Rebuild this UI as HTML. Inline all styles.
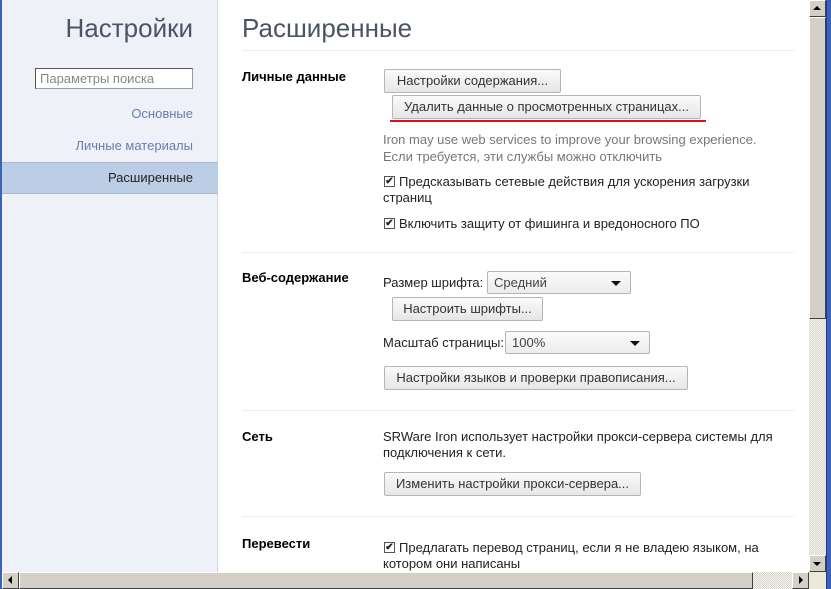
<!DOCTYPE html><html><head><meta charset="utf-8"><style>
*{margin:0;padding:0;box-sizing:border-box}
body{width:831px;height:589px;overflow:hidden;background:#fff;font-family:"Liberation Sans",sans-serif;font-size:13px;color:#222;position:relative}
.a{position:absolute;white-space:nowrap}
.btn{position:absolute;height:24px;border:1px solid #b5b5b5;border-radius:2px;background:linear-gradient(#fafafa,#e6e6e6);font-size:13px;color:#333;line-height:22px;text-align:center}
.sel{position:absolute;height:23px;border:1px solid #b5b5b5;border-radius:2px;background:linear-gradient(#fafafa,#ececec);line-height:21px;padding-left:6px;color:#444}
.sel:after{content:"";position:absolute;right:9px;top:9px;border-left:5px solid transparent;border-right:5px solid transparent;border-top:5px solid #111}
.cb{position:absolute;width:11px;height:11px;border:1px solid #555;background:#fff;font-size:10px;line-height:9px;text-align:center;font-weight:bold}
.sep{position:absolute;left:242px;width:553px;height:1px;background:#eee}
h4{position:absolute;left:242px;font-size:13px;font-weight:bold;color:#000}
</style></head><body>
<div class="a" style="left:0;top:0;width:2px;height:589px;background:#3a62b5"></div>
<div class="a" style="left:2px;top:0;width:216px;height:572px;background:#eef1f7;border-right:1px solid #d4d8e0"></div>
<div class="a" style="right:638px;top:13px;font-size:26px;color:#4b5467">Настройки</div>
<div class="a" style="left:35px;top:68px;width:158px;height:21px;border:1px solid #999;border-top-color:#555;border-left-color:#555;background:#fff;color:#888;padding-left:4px;line-height:19px">Параметры поиска</div>
<div class="a" style="right:638px;top:106px;color:#6a7cab">Основные</div>
<div class="a" style="right:638px;top:138px;color:#6a7cab">Личные материалы</div>
<div class="a" style="left:2px;top:162px;width:216px;height:32px;background:#bccde6;border-top:1px solid #a8b8d0;border-bottom:1px solid #a8b8d0"></div>
<div class="a" style="right:638px;top:170px;color:#222">Расширенные</div>
<div class="a" style="left:242px;top:13px;font-size:26px;color:#4b5467">Расширенные</div>
<div class="sep" style="top:50px"></div>
<h4 style="top:69px">Личные данные</h4>
<div class="btn" style="left:384px;top:69px;width:177px">Настройки содержания...</div>
<div class="btn" style="left:392px;top:95px;width:309px">Удалить данные о просмотренных страницах...</div>
<div class="a" style="left:390px;top:120px;width:316px;height:2px;background:#e0101a"></div>
<div class="a" style="left:383px;top:131px;color:#777;line-height:17px">Iron may use web services to improve your browsing experience.<br>Если требуется, эти службы можно отключить</div>
<div class="cb" style="left:384px;top:176px">✔</div>
<div class="a" style="left:383px;top:174px;line-height:16px;text-indent:16px">Предсказывать сетевые действия для ускорения загрузки<br>страниц</div>
<div class="cb" style="left:384px;top:218px">✔</div>
<div class="a" style="left:399px;top:216px">Включить защиту от фишинга и вредоносного ПО</div>
<div class="sep" style="top:252px"></div>
<h4 style="top:270px">Веб-содержание</h4>
<div class="a" style="left:383px;top:275px">Размер шрифта:</div>
<div class="sel" style="left:487px;top:271px;width:144px">Средний</div>
<div class="btn" style="left:392px;top:297px;width:151px">Настроить шрифты...</div>
<div class="a" style="left:383px;top:335px">Масштаб страницы:</div>
<div class="sel" style="left:505px;top:331px;width:145px">100%</div>
<div class="btn" style="left:384px;top:366px;width:304px">Настройки языков и проверки правописания...</div>
<div class="sep" style="top:410px"></div>
<h4 style="top:429px">Сеть</h4>
<div class="a" style="left:383px;top:429px;line-height:16px">SRWare Iron использует настройки прокси-сервера системы для<br>подключения к сети.</div>
<div class="btn" style="left:384px;top:472px;width:257px">Изменить настройки прокси-сервера...</div>
<div class="sep" style="top:516px"></div>
<h4 style="top:536px">Перевести</h4>
<div class="cb" style="left:384px;top:542px">✔</div>
<div class="a" style="left:383px;top:540px;line-height:16px;text-indent:16px">Предлагать перевод страниц, если я не владею языком, на<br>котором они написаны</div>
<div class="a" style="left:809px;top:0;width:17px;height:572px;background:repeating-conic-gradient(#f4f3ee 0 25%,#d8d6cc 0 50%) 0 0/2px 2px"></div>
<div class="a" style="left:809px;top:0;width:17px;height:17px;background:#d4d0c8;border:1px solid;border-color:#fff #404040 #404040 #fff"></div>
<div class="a" style="left:813px;top:6px;border-left:4px solid transparent;border-right:4px solid transparent;border-bottom:4px solid #000"></div>
<div class="a" style="left:809px;top:17px;width:17px;height:302px;background:#d4d0c8;border:1px solid;border-color:#fff #404040 #404040 #fff"></div>
<div class="a" style="left:809px;top:555px;width:17px;height:17px;background:#d4d0c8;border:1px solid;border-color:#fff #404040 #404040 #fff"></div>
<div class="a" style="left:813px;top:562px;border-left:4px solid transparent;border-right:4px solid transparent;border-top:4px solid #000"></div>
<div class="a" style="left:826px;top:0;width:5px;height:589px;background:#3a62b5;border-left:1px solid #1b3d8a"></div>
<div class="a" style="left:2px;top:572px;width:824px;height:17px;background:repeating-conic-gradient(#f4f3ee 0 25%,#d8d6cc 0 50%) 0 0/2px 2px"></div>
<div class="a" style="left:2px;top:572px;width:17px;height:17px;background:#d4d0c8;border:1px solid;border-color:#fff #404040 #404040 #fff"></div>
<div class="a" style="left:8px;top:576px;border-top:4px solid transparent;border-bottom:4px solid transparent;border-right:4px solid #000"></div>
<div class="a" style="left:19px;top:572px;width:734px;height:17px;background:#d4d0c8;border:1px solid;border-color:#fff #404040 #404040 #fff"></div>
<div class="a" style="left:792px;top:572px;width:17px;height:17px;background:#d4d0c8;border:1px solid;border-color:#fff #404040 #404040 #fff"></div>
<div class="a" style="left:799px;top:576px;border-top:4px solid transparent;border-bottom:4px solid transparent;border-left:4px solid #000"></div>
<div class="a" style="left:809px;top:572px;width:17px;height:17px;background:#ece9d8"></div>
</body></html>
